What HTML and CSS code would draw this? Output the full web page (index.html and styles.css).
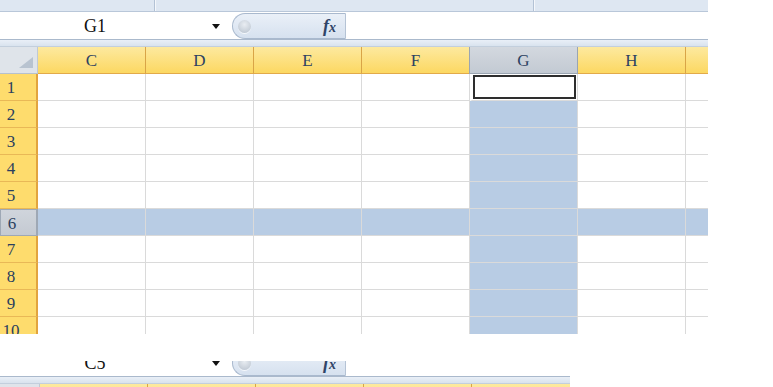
FILE: index.html
```html
<!DOCTYPE html>
<html lang="en">
<head>
  <meta charset="UTF-8">
  <title>Sheet selection</title>
  <link rel="stylesheet" href="styles.css">
</head>
<body>
  <div id="sheet">
    <!-- Ribbon edge -->
    <div class="ribbon">
      <div class="ribbon-group first"></div>
      <div class="ribbon-group second"></div>
    </div>

    <!-- Name box + formula bar -->
    <div class="formula-bar">
      <div class="name-box"><span class="name-text">G1</span><span class="name-arrow"></span></div>
      <div class="fx-button"><span class="fx-knob"></span><span class="fx-label">f<span class="fx-x">x</span></span></div>
      <div class="formula-input"></div>
    </div>
    <div class="bar-sep"></div>

    <!-- Grid -->
    <div class="grid-wrap">
      <div class="head">
        <div class="corner"><span class="corner-tri"></span></div>
        <div class="col-h">C</div>
        <div class="col-h">D</div>
        <div class="col-h">E</div>
        <div class="col-h">F</div>
        <div class="col-h cur">G</div>
        <div class="col-h">H</div>
        <div class="col-h last"></div>
      </div>
      <div class="row">
        <div class="rh"><span>1</span></div>
        <div class="c"></div><div class="c"></div><div class="c"></div><div class="c"></div>
        <div class="c active"></div><div class="c"></div><div class="c last"></div>
      </div>
      <div class="row">
        <div class="rh"><span>2</span></div>
        <div class="c"></div><div class="c"></div><div class="c"></div><div class="c"></div>
        <div class="c sel"></div><div class="c"></div><div class="c last"></div>
      </div>
      <div class="row">
        <div class="rh"><span>3</span></div>
        <div class="c"></div><div class="c"></div><div class="c"></div><div class="c"></div>
        <div class="c sel"></div><div class="c"></div><div class="c last"></div>
      </div>
      <div class="row">
        <div class="rh"><span>4</span></div>
        <div class="c"></div><div class="c"></div><div class="c"></div><div class="c"></div>
        <div class="c sel"></div><div class="c"></div><div class="c last"></div>
      </div>
      <div class="row">
        <div class="rh"><span>5</span></div>
        <div class="c"></div><div class="c"></div><div class="c"></div><div class="c"></div>
        <div class="c sel"></div><div class="c"></div><div class="c last"></div>
      </div>
      <div class="row hl">
        <div class="rh"><span>6</span></div>
        <div class="c"></div><div class="c"></div><div class="c"></div><div class="c"></div>
        <div class="c"></div><div class="c"></div><div class="c last"></div>
      </div>
      <div class="row">
        <div class="rh"><span>7</span></div>
        <div class="c"></div><div class="c"></div><div class="c"></div><div class="c"></div>
        <div class="c sel"></div><div class="c"></div><div class="c last"></div>
      </div>
      <div class="row">
        <div class="rh"><span>8</span></div>
        <div class="c"></div><div class="c"></div><div class="c"></div><div class="c"></div>
        <div class="c sel"></div><div class="c"></div><div class="c last"></div>
      </div>
      <div class="row">
        <div class="rh"><span>9</span></div>
        <div class="c"></div><div class="c"></div><div class="c"></div><div class="c"></div>
        <div class="c sel"></div><div class="c"></div><div class="c last"></div>
      </div>
      <div class="row">
        <div class="rh"><span>10</span></div>
        <div class="c"></div><div class="c"></div><div class="c"></div><div class="c"></div>
        <div class="c sel"></div><div class="c"></div><div class="c last"></div>
      </div>
    </div>
  </div>

  <!-- Second cropped shot -->
  <div id="sheetCrop">
    <div class="formula-bar pulled">
      <div class="name-box"><span class="name-text">C5</span><span class="name-arrow"></span></div>
      <div class="fx-button"><span class="fx-knob"></span><span class="fx-label">f<span class="fx-x">x</span></span></div>
      <div class="formula-input"></div>
    </div>
    <div class="bar-sep"></div>
    <div class="head">
      <div class="corner wide"></div>
      <div class="col-h">C</div>
      <div class="col-h">D</div>
      <div class="col-h">E</div>
      <div class="col-h">F</div>
      <div class="col-h last"></div>
    </div>
  </div>
</body>
</html>
```

FILE: styles.css
```css
/* General Reset */
* {
  box-sizing: border-box;
}

body {
  margin: 0;
  background: #fff;
  font-family: "Liberation Serif", serif;
}

#sheet {
  width: 708px;
}

/* Ribbon edge */
.ribbon {
  display: flex;
  height: 12px;
  background: #dee7f2;
  border-bottom: 1px solid #b9c7d9;
}

.ribbon-group {
  border-right: 1px solid #b3c2d5;
  box-shadow: 1px 0 0 #f4f7fb;
}

.ribbon-group.first {
  width: 155px;
}

.ribbon-group.second {
  width: 379px;
}

/* Formula bar */
.formula-bar {
  display: flex;
  height: 27px;
  padding-top: 1px;
  background: #fff;
}

.name-box {
  width: 232px;
  display: flex;
  align-items: center;
}

.name-text {
  width: 190px;
  text-align: center;
  font-size: 18px;
  color: #111;
}

.name-arrow {
  margin-left: 22px;
  margin-top: 1px;
  width: 0;
  height: 0;
  border-left: 4px solid transparent;
  border-right: 4px solid transparent;
  border-top: 5px solid #111;
}

.fx-button {
  width: 114px;
  display: flex;
  align-items: center;
  border: 1px solid #a9b9ce;
  border-right-color: #b5c3d5;
  border-radius: 14px 0 0 14px;
  background: linear-gradient(#eaf0f8, #d6e1ef);
}

.fx-knob {
  width: 13px;
  height: 13px;
  margin-left: 5px;
  border-radius: 50%;
  background: radial-gradient(circle at 50% 35%, #e9edf2, #b7c1cd);
  box-shadow: 0 1px 0 #f5f8fb;
}

.fx-label {
  margin-left: auto;
  margin-right: 9px;
  font-size: 18px;
  font-weight: bold;
  font-style: italic;
  color: #2f4468;
}

.fx-x {
  font-size: 14px;
}

.formula-input {
  flex: 1;
}

.bar-sep {
  height: 8px;
  border-top: 1px solid #aab9cc;
  border-bottom: 1px solid #c3cfdd;
  background: linear-gradient(#e9eff7, #d9e3ee);
}

/* Grid */
.grid-wrap {
  height: 287px;
  overflow: hidden;
}

.head {
  display: flex;
  height: 27px;
}

.corner {
  width: 38px;
  display: flex;
  justify-content: flex-end;
  align-items: flex-end;
  padding: 0 4px 5px 0;
  background: #dfe4ea;
  border-right: 1px solid #c0c9d4;
  border-bottom: 1px solid #b6c1ce;
}

.corner.wide {
  width: 40px;
}

.corner-tri {
  width: 0;
  height: 0;
  border-left: 14px solid transparent;
  border-bottom: 11px solid #b8c3d0;
}

.col-h {
  width: 108px;
  text-align: center;
  padding-top: 2px;
  line-height: 24px;
  font-size: 17px;
  color: #2c4262;
  background: linear-gradient(#fde99f, #fcd862);
  border-right: 1px solid #d9a447;
  border-bottom: 1px solid #e2aa4a;
}

.col-h.cur {
  background: linear-gradient(#d3d8df, #c3cad3);
  border-color: #9aa5b2;
  border-left: 1px solid #9aa5b2;
  margin-left: -1px;
  width: 109px;
}

.col-h.last {
  flex: 1;
  border-right: 0;
}

.row {
  display: flex;
  height: 27px;
}

.rh {
  width: 38px;
  font-size: 17px;
  color: #2a3f5e;
  background: #fedc6d;
  border-right: 2px solid #e2a43e;
  border-bottom: 1px solid #e9b856;
}

.rh span {
  display: block;
  width: 22px;
  text-align: center;
  line-height: 28px;
}

.c {
  width: 108px;
  border-right: 1px solid #dadada;
  border-bottom: 1px solid #dadada;
}

.c.last {
  flex: 1;
  border-right: 0;
}

.c.sel {
  background: #b8cce4;
}

.c.active {
  box-shadow: inset 0 0 0 1px #fff, inset 0 0 0 3px #2e2e2e;
  border-left: 2px solid #fff;
}

.row.hl .c {
  background: #b8cce4;
}

.row.hl .rh {
  background: linear-gradient(#d0d5dc, #c4cad2);
  border: 1px solid #9ea8b5;
  border-right-width: 2px;
}

/* Second cropped shot */
#sheetCrop {
  width: 570px;
  height: 26px;
  margin-top: 27px;
  overflow: hidden;
}

.formula-bar.pulled {
  margin-top: -12px;
}
```
